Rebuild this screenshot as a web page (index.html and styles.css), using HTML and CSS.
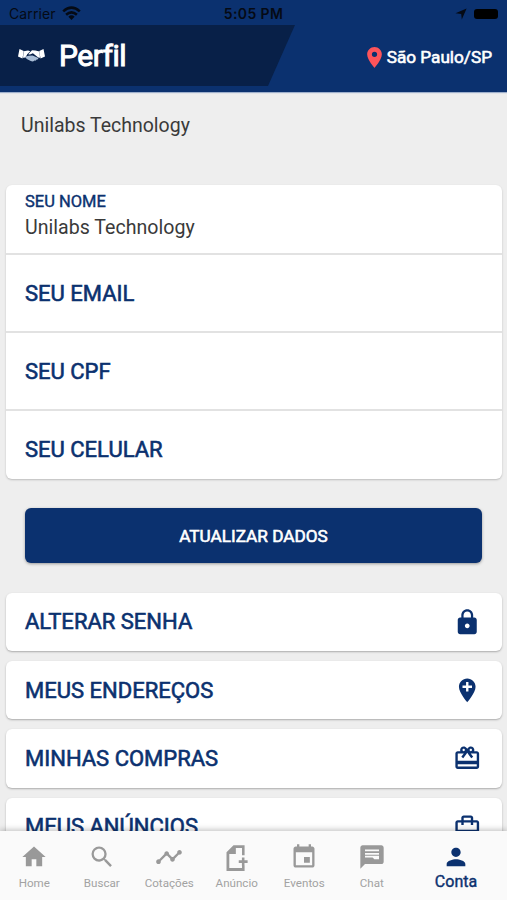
FILE: index.html
```html
<!DOCTYPE html>
<html lang="pt-BR">
<head>
<meta charset="utf-8">
<title>Perfil</title>
<link rel="stylesheet" href="styles.css">
</head>
<body>
<div class="app">
  <div class="status">
    <div class="carrier"><span>Carrier</span>
      <svg width="19" height="15" viewBox="0 0 19 15" fill="none" stroke="#050a14" stroke-width="2.6"><path d="M1.2 5.4Q9.5-2 17.8 5.4M4.1 8.7Q9.5 4 14.9 8.7"/><path d="M6.4 10.7Q9.5 8 12.6 10.7L9.5 14Z" fill="#050a14" stroke="none"/></svg>
    </div>
    <span class="time">5:05 PM</span>
    <div class="indicators">
      <svg width="12" height="12" viewBox="0 0 12 12"><path d="M11.6.4 6.8 11.6 6.2 6 .5 5.2Z" fill="#050a14"/></svg>
      <span class="battery"></span>
    </div>
  </div>
  <header class="header">
    <div class="brand">
      <svg class="hands" width="27" height="17" viewBox="0 0 27 17"><path d="M1.500 2 5.700 4 4.500 11.400 0 9.600ZM25.500 2 21.300 4 22.500 11.400 27 9.600Z" fill="#fff"/><path d="M5.700 4.200 10 3.500 12.300 4.300 9.200 7.200 7.500 10.500 5 10.800Z" fill="#fff"/><path d="M7 9.800 10.500 8.800 14.500 8.500 20.300 11.100Q20.600 12.700 18.600 12.600 18.200 14 16.400 13.500 15 15.200 12.700 14L8.800 12Z" fill="#a9bdd6"/><path d="M10.200 7.200 14 3.300 17.400 3.400 21.500 4.600 22 10.800 20.200 10.500 14.900 6.200 12 7.400Z" fill="#fff"/></svg>
      <h1>Perfil</h1>
    </div>
    <div class="place">
      <svg width="15" height="21" viewBox="5 2 14 20"><path fill="#fd545a" d="M12 2C8.130 2 5 5.130 5 9c0 5.250 7 13 7 13s7-7.750 7-13c0-3.870-3.130-7-7-7zm0 9.500a2.500 2.500 0 1 1 0-5 2.500 2.500 0 0 1 0 5z"/></svg>
      <span>São Paulo/SP</span>
    </div>
  </header>
  <main class="content">
    <p class="user">Unilabs Technology</p>
    <section class="form">
      <div class="field filled"><label>SEU NOME</label><span>Unilabs Technology</span></div>
      <div class="field"><span class="label">SEU EMAIL</span></div>
      <div class="field"><span class="label">SEU CPF</span></div>
      <div class="field last"><span class="label">SEU CELULAR</span></div>
    </section>
    <button class="submit">ATUALIZAR DADOS</button>
    <nav class="menu">
      <div class="item"><span class="label">ALTERAR SENHA</span>
        <svg viewBox="0 0 24 24"><path d="M18 8h-1V6c0-2.760-2.240-5-5-5S7 3.240 7 6v2H6c-1.100 0-2 .9-2 2v10c0 1.100.9 2 2 2h12c1.100 0 2-.9 2-2V10c0-1.100-.9-2-2-2zm-6 9c-1.100 0-2-.9-2-2s.9-2 2-2 2 .9 2 2-.9 2-2 2zm3.100-9H8.900V6c0-1.710 1.390-3.100 3.100-3.100s3.100 1.390 3.100 3.100v2z"/></svg></div>
      <div class="item"><span class="label">MEUS ENDEREÇOS</span>
        <svg viewBox="0 0 24 24"><path d="M12 2C8.140 2 5 5.140 5 9c0 5.250 7 13 7 13s7-7.750 7-13c0-3.860-3.140-7-7-7zm4 8h-3v3h-2v-3H8V8h3V5h2v3h3v2z"/></svg></div>
      <div class="item"><span class="label">MINHAS COMPRAS</span>
        <svg viewBox="0 0 24 24"><path d="M20 6h-2.180c.11-.31.18-.65.18-1 0-1.660-1.340-3-3-3-1.050 0-1.960.54-2.500 1.350l-.5.67-.5-.68C10.960 2.540 10.050 2 9 2 7.340 2 6 3.340 6 5c0 .35.070.69.180 1H4c-1.110 0-1.990.89-1.990 2L2 19c0 1.110.89 2 2 2h16c1.110 0 2-.89 2-2V8c0-1.110-.89-2-2-2zm-5-2c.55 0 1 .45 1 1s-.45 1-1 1-1-.45-1-1 .45-1 1-1zM9 4c.55 0 1 .45 1 1s-.45 1-1 1-1-.45-1-1 .45-1 1-1zm11 15H4v-2h16v2zm0-5H4V8h5.080L7 10.830 8.620 12 11 8.760l1-1.360 1 1.360L15.380 12 17 10.830 14.920 8H20v6z"/></svg></div>
      <div class="item"><span class="label">MEUS ANÚNCIOS</span>
        <svg viewBox="0 0 24 24"><path d="M20 6h-3V4c0-1.110-.89-2-2-2H9c-1.110 0-2 .89-2 2v2H4c-1.110 0-2 .89-2 2v11c0 1.110.89 2 2 2h16c1.110 0 2-.89 2-2V8c0-1.110-.89-2-2-2zM9 4h6v2H9V4zm11 15H4v-2h16v2zm0-5H4V8h3v2h2V8h6v2h2V8h3v6z"/></svg></div>
    </nav>
  </main>
  <footer class="tabs">
    <div class="tab"><svg viewBox="0 0 24 24"><path d="M10 20v-6h4v6h5v-8h3L12 3 2 12h3v8z"/></svg><span>Home</span></div>
    <div class="tab"><svg viewBox="0 0 24 24"><path d="M15.500 14h-.79l-.28-.27A6.470 6.470 0 0 0 16 9.500 6.500 6.500 0 1 0 9.500 16c1.610 0 3.090-.59 4.230-1.570l.27.28v.79l5 4.990L20.490 19l-4.990-5zm-6 0C7.010 14 5 11.990 5 9.500S7.010 5 9.500 5 14 7.010 14 9.500 11.990 14 9.500 14z"/></svg><span>Buscar</span></div>
    <div class="tab"><svg viewBox="0 0 24 24"><path d="M23 8c0 1.100-.9 2-2 2-.18 0-.35-.02-.51-.07l-3.560 3.550c.05.16.07.34.07.52 0 1.100-.9 2-2 2s-2-.9-2-2c0-.18.020-.36.070-.52l-2.550-2.550c-.16.05-.34.07-.52.070s-.36-.02-.52-.07l-4.550 4.560c.05.16.07.33.07.51 0 1.100-.9 2-2 2s-2-.9-2-2 .9-2 2-2c.18 0 .35.02.51.07l4.560-4.550C8.020 9.360 8 9.180 8 9c0-1.100.9-2 2-2s2 .9 2 2c0 .18-.02.36-.07.52l2.550 2.550c.16-.05.34-.07.52-.07s.36.02.52.07l3.550-3.560C19.020 8.350 19 8.180 19 8c0-1.100.9-2 2-2s2 .9 2 2z"/></svg><span>Cotações</span></div>
    <div class="tab"><svg viewBox="0 0 24 24"><path d="M9 2h9.500v8.500H16.300V4.200H11V9.500H5.400v12h10.900V19h2.200v5H3V8zM16.200 12.500h2.200v2.200h2.700v2.400h-2.700v2.300h-2.200v-2.300h-2.700v-2.400h2.700z"/></svg><span>Anúncio</span></div>
    <div class="tab"><svg viewBox="0 0 24 24"><path d="M17 12h-5v5h5v-5zM16 1v2H8V1H6v2H5c-1.110 0-1.990.9-1.990 2L3 19c0 1.100.89 2 2 2h14c1.100 0 2-.9 2-2V5c0-1.100-.9-2-2-2h-1V1h-2zm3 18H5V8h14v11z"/></svg><span>Eventos</span></div>
    <div class="tab"><svg viewBox="0 0 24 24"><path d="M20 2H4c-1.100 0-1.990.9-1.990 2L2 22l4-4h14c1.100 0 2-.9 2-2V4c0-1.100-.9-2-2-2zM6 5.500h12V7H6zm0 3h12V10H6zM18 14h-4l-1.500-1.500H6V11h12v3z"/></svg><span>Chat</span></div>
    <div class="tab active"><svg viewBox="0 0 24 24"><path d="M12 12c2.210 0 4-1.790 4-4s-1.790-4-4-4-4 1.790-4 4 1.790 4 4 4zm0 2c-2.670 0-8 1.340-8 4v2h16v-2c0-2.660-5.330-4-8-4z"/></svg><span>Conta</span></div>
  </footer>
</div>
</body>
</html>
```

FILE: styles.css
```css
* { box-sizing: border-box; }
body { margin: 0; font-family: Roboto, "Liberation Sans", sans-serif; color: #3a3a3a; background: #eee; }
h1, p { margin: 0; font-weight: 400; }
.app { height: 900px; display: flex; flex-direction: column; overflow: hidden; }
.status { height: 25px; flex: none; display: grid; grid-template-columns: 1fr auto 1fr; align-items: center; padding: 2px 9px 0; background: #0b316f; color: #050a14; font: 14px Inter, sans-serif; }
.carrier, .indicators { display: flex; align-items: center; gap: 6px; }
.carrier { letter-spacing: .1px; }
.time { font-weight: 600; letter-spacing: .4px; }
.indicators { justify-content: flex-end; gap: 7px; }
.battery { width: 24px; height: 10px; border-radius: 3px; background: #000; }
.header { height: 67px; flex: none; display: flex; justify-content: space-between; background: #0b316f; box-shadow: 0 1px 1px #9fb0cc; padding-right: 15px; }
.brand { width: 295px; height: 61px; display: flex; align-items: center; padding-left: 18px; gap: 14px; background: #082048; clip-path: polygon(0 0, 100% 0, 268px 100%, 0 100%); }
.brand h1 { color: #fff; font-size: 30px; letter-spacing: -.5px; -webkit-text-stroke: 1px #fff; }
.place { display: flex; align-items: center; height: 64px; gap: 5px; color: #fff; font-size: 17.2px; -webkit-text-stroke: .6px #fff; }
.content { flex: 1; min-height: 0; overflow: hidden; padding: 0 5px 0 6px; }
.user { height: 93px; padding: 22px 0 0 15px; font-size: 19.5px; line-height: 24px; }
.form { border-radius: 6px; background: #fff; box-shadow: 0 1px 2px #bbb; }
.field { height: 78px; padding-left: 19px; display: flex; align-items: center; border-bottom: 2px solid #e2e2e2; }
.field.filled { height: 70px; flex-direction: column; align-items: flex-start; padding-top: 6px; font-size: 19.6px; line-height: 24px; gap: 3px; justify-content: flex-start; }
.field.last { height: 68px; border: 0; padding-top: 9px; }
.field label { font-size: 16.5px; line-height: 22px; color: #0b316f; -webkit-text-stroke: .4px #0b316f; }
.label { font-size: 22px; color: #0b316f; -webkit-text-stroke: .6px #0b316f; }
.submit { display: block; width: calc(100% - 39px); height: 55px; margin: 29px 20px 29.5px 19px; border: 0; border-radius: 6px; background: #0b316f; color: #fff; font: 17.2px Roboto, sans-serif; -webkit-text-stroke: .6px #fff; box-shadow: 0 1px 3px #999; }
.menu { display: grid; gap: 9.9px; }
.item { height: 58.5px; display: flex; align-items: center; justify-content: space-between; padding: 0 20.5px 0 19px; background: #fff; border-radius: 6px; box-shadow: 0 1px 2px #aaa; }
.item svg { width: 28.5px; height: 28.5px; fill: #0b316f; }
.tabs { position: relative; height: 69px; flex: none; display: grid; grid-template-columns: repeat(6, 67.5px) 1fr; background: #fafafa; box-shadow: 0 -1px 6px #0004; }
.tab { display: flex; flex-direction: column; align-items: center; padding: 12px 0 0 1px; font-size: 11.6px; color: #a2a2a2; fill: #999; }
.tab svg { width: 28px; height: 28px; flex: none; }
.tab span { margin-top: 5px; line-height: 14px; }
.tab.active { padding-left: 0; color: #0b316f; fill: #0b316f; font-size: 16px; -webkit-text-stroke: .4px #0b316f; }
.tab.active span { margin-top: 2px; line-height: 18px; }
```
